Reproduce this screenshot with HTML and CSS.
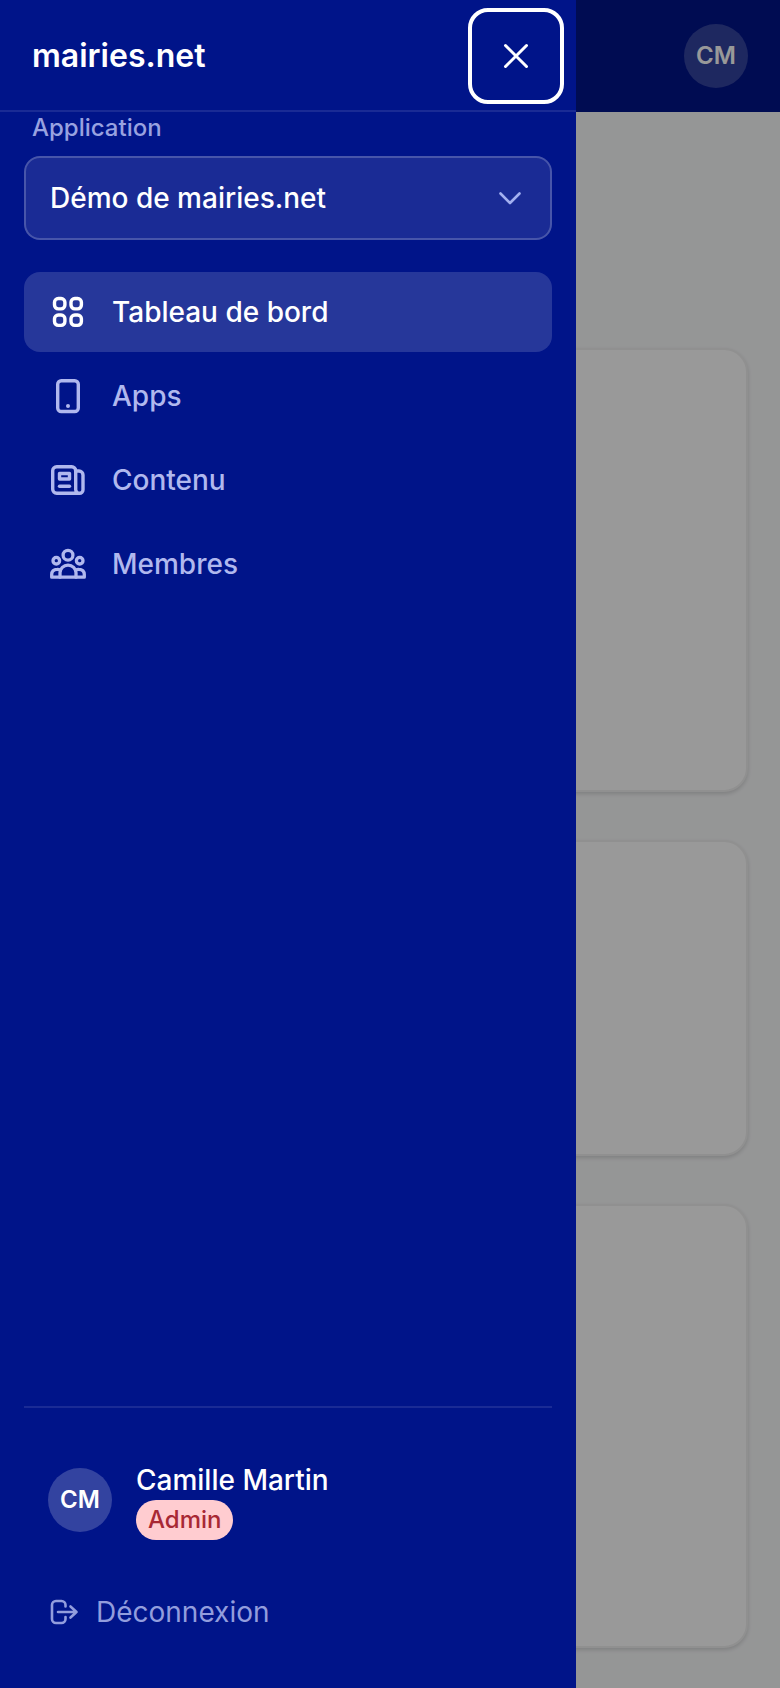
FILE: index.html
```html
<!DOCTYPE html>
<html lang="fr">
<head>
  <meta charset="UTF-8" />
  <meta name="viewport" content="width=device-width, initial-scale=1.0" />
  <title>mairies.net</title>
  <link rel="stylesheet" href="styles.css">
</head>
<body>
  <header class="topbar">
    <span class="avatar">CM</span>
  </header>

  <main class="content">
    <section class="card card-large"></section>
    <section class="card card-small"></section>
    <section class="card card-large"></section>
  </main>

  <div class="backdrop"></div>

  <aside class="sidebar">
    <div class="sidebar-header">
      <a href="#" class="brand">mairies.net</a>
      <button type="button" class="close" aria-label="Fermer">
        <svg class="icon" viewBox="0 0 40 40" stroke-width="3">
          <path d="M9.5 9.5l21 21M30.5 9.5l-21 21" />
        </svg>
      </button>
    </div>

    <div class="sidebar-body">
      <label for="application" class="app-label">Application</label>
      <div class="app-select">
        <select id="application" name="application">
          <option>Démo de mairies.net</option>
        </select>
        <svg class="icon icon-small chevron" viewBox="0 0 32 32" stroke-width="2.6">
          <path d="M6.5 11.5l9.5 9.5 9.5-9.5" />
        </svg>
      </div>

      <nav class="nav">
        <a href="#" class="nav-link active">
          <svg class="icon" viewBox="0 0 40 40" stroke-width="3.4">
            <rect x="6.5" y="6.5" width="10.4" height="10.4" rx="3.8" />
            <rect x="23" y="6.5" width="10.4" height="10.4" rx="3.8" />
            <rect x="6.5" y="23" width="10.4" height="10.4" rx="3.8" />
            <rect x="23" y="23" width="10.4" height="10.4" rx="3.8" />
          </svg>
          Tableau de bord
        </a>
        <a href="#" class="nav-link">
          <svg class="icon" viewBox="0 0 40 40" stroke-width="3.4">
            <rect x="9.7" y="4.7" width="20.6" height="30.8" rx="3.6" />
            <circle cx="20" cy="30" r="2" class="fill" />
          </svg>
          Apps
        </a>
        <a href="#" class="nav-link">
          <svg class="icon" viewBox="0 0 40 40" stroke-width="3.4">
            <path d="M31.5 33.3H8.700a4 4 0 0 1-4-4v-18.600a4 4 0 0 1 4-4h15a4 4 0 0 1 4 4v18.800a3.800 3.800 0 0 0 3.800 3.800a3.500 3.500 0 0 0 3.500-3.500V15a4 4 0 0 0-4-4h-3.300" />
            <rect x="11.500" y="13.500" width="10" height="5.500" />
            <path d="M11.500 26.300h10" />
          </svg>
          Contenu
        </a>
        <a href="#" class="nav-link">
          <svg class="icon" viewBox="0 0 40 40" stroke-width="3.3">
            <circle cx="20" cy="11.200" r="4.900" />
            <circle cx="8.300" cy="16.700" r="3.300" />
            <circle cx="31.700" cy="16.700" r="3.300" />
            <path d="M12 33.200v-4.500a8 7.600 0 0 1 16 0v4.500" />
            <path d="M12.500 26.200a6 6 0 0 0-3.500-.900c-3.300 0-5.300 2.200-5.300 5.200v2.700h32.600v-2.700c0-3-2-5.200-5.300-5.200a6 6 0 0 0-3.500.900" />
          </svg>
          Membres
        </a>
      </nav>
    </div>

    <div class="sidebar-footer">
      <div class="user">
        <span class="avatar">CM</span>
        <div class="user-info">
          <span class="user-name">Camille Martin</span>
          <span class="badge">Admin</span>
        </div>
      </div>
      <button type="button" class="logout">
        <svg class="icon icon-small" viewBox="0 0 32 32" stroke-width="2.6">
          <path d="M17.500 10.500V9a4 4 0 0 0-4-4H8a4 4 0 0 0-4 4v14a4 4 0 0 0 4 4h5.500a4 4 0 0 0 4-4V21" />
          <path d="M10 16h18.500M22.500 10.500l6 5.500-6 5.500" />
        </svg>
        Déconnexion
      </button>
    </div>
  </aside>
</body>
</html>
```
FILE: styles.css
```css
* {
  box-sizing: border-box;
}
body {
  margin: 0;
  min-height: 100vh;
  font-family: Inter, "Liberation Sans", sans-serif;
  font-size: 28px;
  line-height: 40px;
  background: #f9fafb;
}
a {
  color: inherit;
  text-decoration: none;
}
button {
  font: inherit;
  background: none;
  cursor: pointer;
}

/* page */
.topbar {
  display: flex;
  align-items: center;
  justify-content: flex-end;
  height: 112px;
  padding: 0 32px;
  background: #001489;
}
.avatar {
  display: flex;
  align-items: center;
  justify-content: center;
  flex-shrink: 0;
  width: 64px;
  height: 64px;
  border-radius: 50%;
  background: rgba(255, 255, 255, 0.2);
  color: #fff;
  font-size: 24px;
  font-weight: 600;
}
.content {
  display: flex;
  flex-direction: column;
  gap: 48px;
  padding: 236px 32px 40px;
}
.card {
  background: #fff;
  border: 2px solid #f0f0f0;
  border-radius: 24px;
  box-shadow: 0 2px 4px rgba(0, 0, 0, 0.15);
}
.card-large {
  min-height: 444px;
}
.card-small {
  min-height: 316px;
}
.backdrop {
  position: fixed;
  inset: 0;
  background: rgba(0, 0, 0, 0.4);
}

/* sidebar */
.sidebar {
  position: fixed;
  top: 0;
  bottom: 0;
  left: 0;
  display: flex;
  flex-direction: column;
  width: 576px;
  max-width: 100%;
  background: #001489;
  color: #fff;
}
.sidebar-header {
  display: flex;
  align-items: center;
  justify-content: space-between;
  height: 112px;
  padding: 2px 12px 0 32px;
  border-bottom: 2px solid rgba(255, 255, 255, 0.1);
}
.brand {
  font-size: 32px;
  font-weight: 600;
}
.close {
  display: flex;
  align-items: center;
  justify-content: center;
  width: 96px;
  height: 96px;
  padding: 0;
  border: 4px solid #fff;
  border-radius: 20px;
  color: #fff;
}
.icon {
  flex-shrink: 0;
  width: 40px;
  height: 40px;
  fill: none;
  stroke: currentColor;
  stroke-linecap: round;
  stroke-linejoin: round;
}
.icon-small {
  width: 32px;
  height: 32px;
}
.icon .fill {
  fill: currentColor;
  stroke: none;
}
.sidebar-body {
  flex: 1;
  padding: 0 24px;
}
.app-label {
  display: block;
  padding: 0 8px;
  margin-bottom: 12px;
  font-size: 24px;
  font-weight: 500;
  line-height: 32px;
  color: #98a2e0;
}
.app-select {
  position: relative;
  margin-bottom: 32px;
}
.app-select select {
  display: block;
  appearance: none;
  width: 100%;
  height: 84px;
  padding: 0 72px 0 24px;
  border: 2px solid rgba(255, 255, 255, 0.2);
  border-radius: 16px;
  background: rgba(255, 255, 255, 0.1);
  color: #fff;
  font: inherit;
  font-weight: 500;
}
.chevron {
  position: absolute;
  top: 26px;
  right: 26px;
  color: #a3b0f0;
  pointer-events: none;
}
.nav {
  display: flex;
  flex-direction: column;
  gap: 4px;
}
.nav-link {
  display: flex;
  align-items: center;
  gap: 24px;
  height: 80px;
  padding: 0 24px;
  border-radius: 16px;
  font-weight: 500;
  color: #b0b8ee;
}
.nav-link.active {
  background: rgba(255, 255, 255, 0.15);
  color: #fff;
}
.sidebar-footer {
  margin: 0 24px;
  padding: 28px 0 36px;
  border-top: 2px solid rgba(255, 255, 255, 0.1);
}
.user {
  display: flex;
  align-items: center;
  gap: 24px;
  padding: 24px;
}
.user-info {
  display: flex;
  flex-direction: column;
  align-items: flex-start;
}
.user-name {
  font-weight: 500;
}
.badge {
  padding: 4px 12px;
  border-radius: 20px;
  background: #ffccd0;
  color: #a82834;
  font-size: 24px;
  font-weight: 500;
  line-height: 32px;
}
.logout {
  display: flex;
  align-items: center;
  gap: 16px;
  width: 100%;
  height: 80px;
  margin-top: 8px;
  padding: 0 24px;
  border: none;
  color: #929ddd;
}
```
